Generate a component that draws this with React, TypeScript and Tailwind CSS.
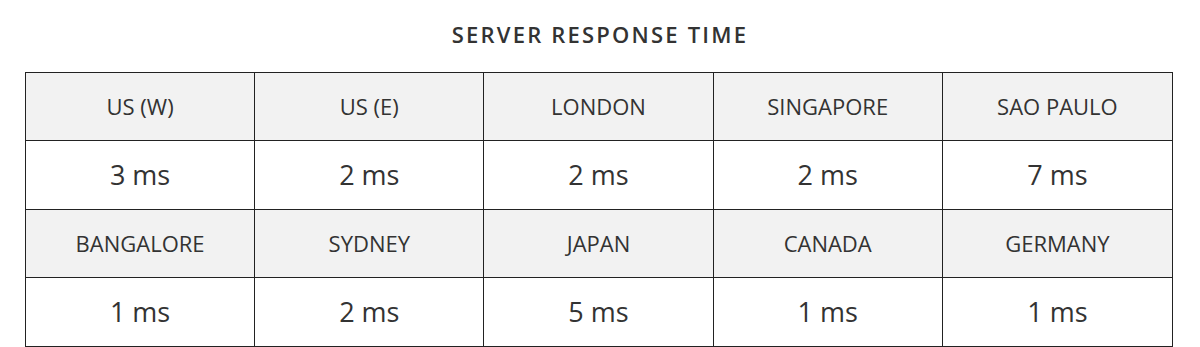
const rows = [
  {
    cities: ['US (W)', 'US (E)', 'LONDON', 'SINGAPORE', 'SAO PAULO'],
    times: ['3 ms', '2 ms', '2 ms', '2 ms', '7 ms'],
  },
  {
    cities: ['BANGALORE', 'SYDNEY', 'JAPAN', 'CANADA', 'GERMANY'],
    times: ['1 ms', '2 ms', '5 ms', '1 ms', '1 ms'],
  },
]

export default function App() {
  return (
    <div
      className="w-[1200px] h-[347px] bg-white text-[#333]"
      style={{ fontFamily: '"Open Sans", "Noto Sans", sans-serif' }}
    >
      <h2 className="pt-[18px] h-[72px] text-center text-[22px] leading-[32px] font-semibold tracking-[0.1em] text-[#333]">
        SERVER RESPONSE TIME
      </h2>
      <div className="mx-[25px] w-[1148px] border border-[#222] grid grid-cols-5">
        {rows.map((row, r) => (
          <div key={r} className="contents">
            {row.cities.map((c, i) => (
              <div
                key={'c' + i}
                className={
                  'flex items-center justify-center bg-[#f2f2f2] text-[22px] border-[#222] ' +
                  (i < 4 ? 'border-r ' : '') +
                  (r > 0 ? 'border-t h-[68px]' : 'h-[67px]')
                }
              >
                {c}
              </div>
            ))}
            {row.times.map((t, i) => (
              <div
                key={'t' + i}
                className={
                  'h-[69px] flex items-center justify-center bg-white text-[27px] border-t border-[#222] ' +
                  (i < 4 ? 'border-r' : '')
                }
              >
                {t}
              </div>
            ))}
          </div>
        ))}
      </div>
    </div>
  )
}
